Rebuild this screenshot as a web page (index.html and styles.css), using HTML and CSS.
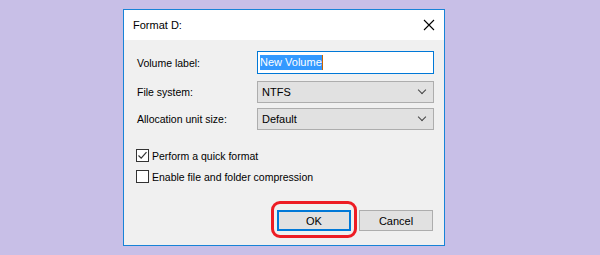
FILE: index.html
```html
<!DOCTYPE html>
<html lang="en">
<head>
    <meta charset="UTF-8">
    <title>Format D:</title>
    <link rel="stylesheet" href="styles.css">
</head>
<body>
    <div class="dialog">
        <div class="titlebar">
            <span class="title">Format D:</span>
            <span class="close">
                <svg width="12" height="12" viewBox="0 0 12 12"><path d="M1 1 L11 11 M11 1 L1 11" stroke="#000" stroke-width="1.1" fill="none"/></svg>
            </span>
        </div>
        <div class="content">
            <div class="field">
                <label>Volume label:</label>
                <div class="textbox"><span class="selected">New Volume</span><span class="caret"></span></div>
            </div>
            <div class="field field-select">
                <label>File system:</label>
                <div class="select">NTFS<span class="chevron"></span></div>
            </div>
            <div class="field field-select2">
                <label>Allocation unit size:</label>
                <div class="select">Default<span class="chevron"></span></div>
            </div>

            <div class="options">
                <div class="check">
                    <span class="box">
                        <svg width="11" height="11" viewBox="0 0 11 11"><path d="M1.5 5.5 L4.2 8.2 L9.5 2.2" stroke="#333" stroke-width="1.2" fill="none"/></svg>
                    </span>
                    <span>Perform a quick format</span>
                </div>
                <div class="check">
                    <span class="box"></span>
                    <span>Enable file and folder compression</span>
                </div>
            </div>

            <div class="buttons">
                <div class="btn-wrap">
                    <button class="btn btn-default">OK</button>
                    <span class="highlight"></span>
                </div>
                <button class="btn">Cancel</button>
            </div>
        </div>
    </div>
</body>
</html>
```

FILE: styles.css
```css
body {
    margin: 0;
    background-color: #c8bfe7;
    font-family: "Liberation Sans", Arial, sans-serif;
    font-size: 10.5px;
    color: #000;
}
.dialog {
    width: 320px;
    margin: 9px 0 0 123px;
    border: 1px solid #1883d7;
    background-color: #f0f0f0;
}
.titlebar {
    height: 30px;
    background-color: #fff;
    display: flex;
    align-items: center;
    justify-content: space-between;
    padding-left: 9px;
}
.title {
    font-size: 11px;
}
.close {
    width: 30px;
    height: 30px;
    display: flex;
    align-items: center;
    justify-content: center;
}
.content {
    padding: 11px 10px 14px 12px;
}
.field {
    display: grid;
    grid-template-columns: 121px 177px;
    align-items: center;
}
.field-select {
    margin-top: 7px;
}
.field-select2 {
    margin-top: 5px;
}
label {
    padding-left: 1px;
}
.textbox {
    height: 23px;
    box-sizing: border-box;
    border: 1px solid #0078d7;
    background-color: #fff;
    display: flex;
    align-items: center;
    padding-left: 2px;
    font-size: 11px;
}
.selected {
    background-color: #3399ff;
    color: #fff;
    line-height: 15px;
}
.caret {
    width: 1px;
    height: 15px;
    background-color: #c86400;
}
.select {
    height: 22px;
    box-sizing: border-box;
    border: 1px solid #adadad;
    background-color: #e1e1e1;
    display: flex;
    align-items: center;
    justify-content: space-between;
    padding: 0 8px 0 4px;
    font-size: 11px;
}
.chevron {
    width: 5px;
    height: 5px;
    border-right: 1px solid #444;
    border-bottom: 1px solid #444;
    transform: rotate(45deg);
    margin-top: -4px;
}
.options {
    margin-top: 19px;
    display: flex;
    flex-direction: column;
    gap: 8px;
}
.check {
    display: flex;
    align-items: center;
    gap: 3px;
    height: 13px;
}
.box {
    width: 13px;
    height: 13px;
    box-sizing: border-box;
    border: 1px solid #333;
    background-color: #fff;
    display: flex;
    align-items: center;
    justify-content: center;
}
.buttons {
    margin-top: 27px;
    display: flex;
    justify-content: flex-end;
    gap: 8px;
    padding-right: 1px;
}
.btn-wrap {
    position: relative;
    display: flex;
}
.btn {
    width: 74px;
    height: 21px;
    box-sizing: border-box;
    border: 1px solid #adadad;
    background-color: #e1e1e1;
    font-family: "Liberation Sans", Arial, sans-serif;
    font-size: 11px;
    padding: 0;
}
.btn-default {
    border: 2px solid #0078d7;
}
.highlight {
    position: absolute;
    left: -6px;
    top: -9px;
    right: -6px;
    bottom: -7px;
    border: 3px solid #ed1c24;
    border-radius: 9px;
}
```
